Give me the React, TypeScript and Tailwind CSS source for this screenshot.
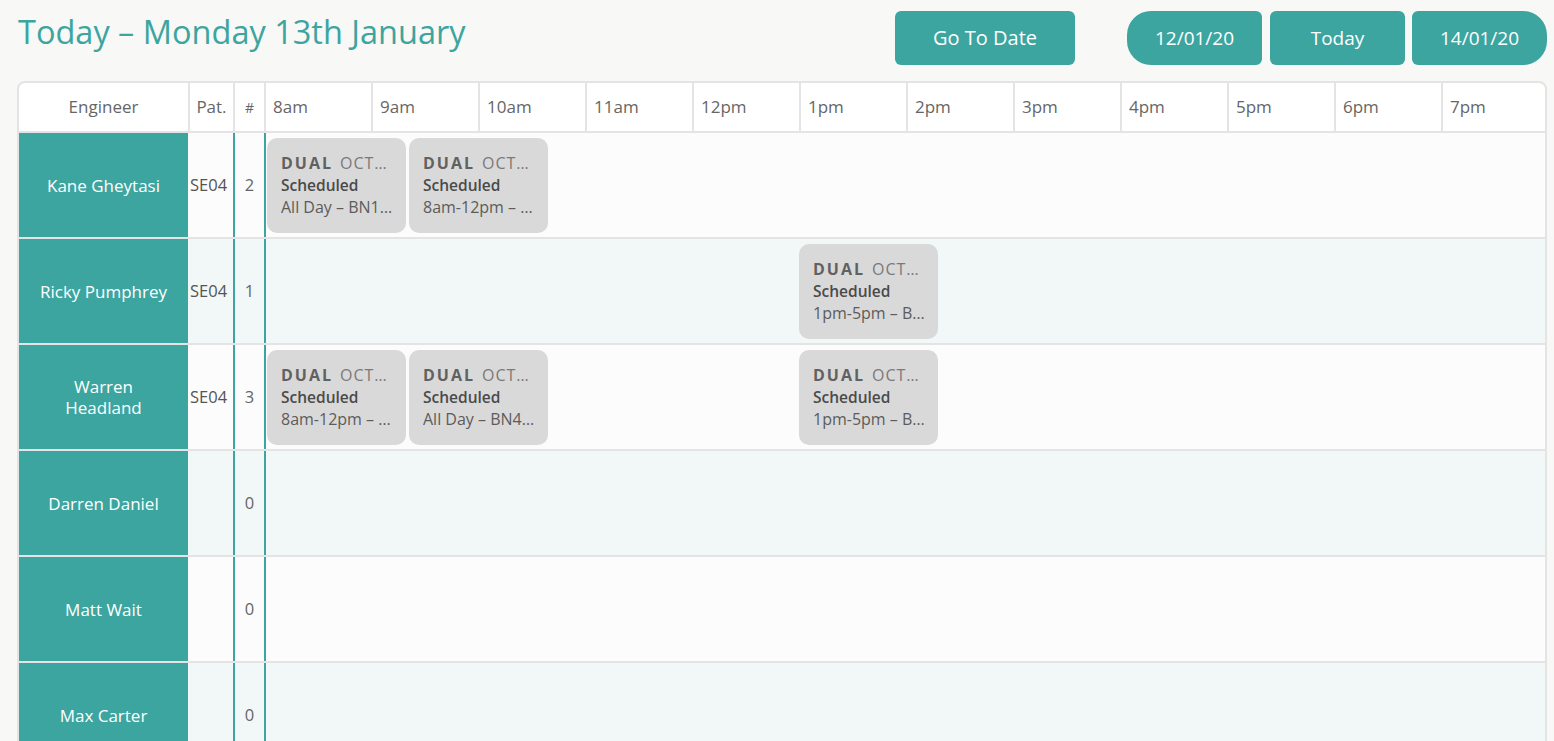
import React from "react";

type Job = { ml: string; time: string };
type Row = { name: string; pat: string; count: string; jobs: Job[] };

const rows: Row[] = [
  {
    name: "Kane Gheytasi",
    pat: "SE04",
    count: "2",
    jobs: [
      { ml: "ml-[1px]", time: "All Day – BN1 3XG" },
      { ml: "ml-[3px]", time: "8am-12pm – BN2 4PL" },
    ],
  },
  {
    name: "Ricky Pumphrey",
    pat: "SE04",
    count: "1",
    jobs: [{ ml: "ml-[533px]", time: "1pm-5pm – BN3 7QT" }],
  },
  {
    name: "Warren Headland",
    pat: "SE04",
    count: "3",
    jobs: [
      { ml: "ml-[1px]", time: "8am-12pm – BN1 6GH" },
      { ml: "ml-[3px]", time: "All Day – BN41 1AB" },
      { ml: "ml-[251px]", time: "1pm-5pm – BN2 9RT" },
    ],
  },
  { name: "Darren Daniel", pat: "", count: "0", jobs: [] },
  { name: "Matt Wait", pat: "", count: "0", jobs: [] },
  { name: "Max Carter", pat: "", count: "0", jobs: [] },
];

const hours = ["8am", "9am", "10am", "11am", "12pm", "1pm", "2pm", "3pm", "4pm", "5pm", "6pm", "7pm"];

function Card({ job }: { job: Job }) {
  return (
    <div
      className={`${job.ml} flex h-[95px] w-[139px] shrink-0 flex-col justify-center rounded-[10px] bg-[#d9d9d9] pl-[14px] pr-[12px]`}
    >
      <div className="truncate text-[16px] leading-[22px] text-[#7a7a7a]">
        <span className="font-bold tracking-[2px] text-[#616161]">DUAL</span>
        <span className="ml-[7px] tracking-[1px]">OCTOPUS</span>
      </div>
      <div className="truncate text-[15.5px] font-semibold leading-[22px] text-[#4a4a4a]">Scheduled</div>
      <div className="truncate text-[16px] leading-[22px] text-[#5c5c5c]">{job.time}</div>
    </div>
  );
}

export default function App() {
  return (
    <div className="min-h-screen bg-[#f8f8f6] pl-[17px] pr-[7px] font-['Open_Sans',sans-serif]">
      <div className="flex h-[81px] items-start">
        <h1 className="ml-[1px] mt-[11px] text-[32.5px] font-normal leading-[42px] text-[#3ca59f]">
          Today – Monday 13th January
        </h1>
        <div className="ml-auto mt-[11px] flex items-center">
          <button className="mr-[52px] h-[54px] w-[180px] rounded-[6px] bg-[#3ca59f] text-[20px] text-white">
            Go To Date
          </button>
          <button className="h-[54px] w-[135px] rounded-l-[24px] rounded-r-[6px] bg-[#3ca59f] text-[19px] text-white">
            12/01/20
          </button>
          <button className="ml-[8px] h-[54px] w-[135px] rounded-[6px] bg-[#3ca59f] text-[19px] text-white">
            Today
          </button>
          <button className="ml-[7px] h-[54px] w-[135px] rounded-l-[6px] rounded-r-[24px] bg-[#3ca59f] text-[19px] text-white">
            14/01/20
          </button>
        </div>
      </div>

      <div className="overflow-hidden rounded-t-[8px] border-2 border-[#e4e4e4] bg-white">
        <div className="grid h-[50px] grid-cols-[171px_45px_31px_repeat(11,107px)_minmax(0,1fr)] border-b-2 border-[#e4e4e4] text-[17px] text-[#666]">
          <div className="flex items-center justify-center border-r-2 border-[#e4e4e4]">Engineer</div>
          <div className="flex items-center justify-center border-r-2 border-[#e4e4e4]">Pat.</div>
          <div className="flex items-center justify-center border-r-2 border-[#e4e4e4] text-[14px]">#</div>
          {hours.map((h, i) => (
            <div
              key={h}
              className={`flex items-center pl-[7px] ${i < hours.length - 1 ? "border-r-2 border-[#e4e4e4]" : ""}`}
            >
              {h}
            </div>
          ))}
        </div>

        {rows.map((r, i) => (
          <div
            key={r.name}
            className={`flex h-[106px] border-b-2 border-[#e4e4e4] ${i % 2 === 0 ? "bg-[#fcfcfc]" : "bg-[#f2f7f7]"}`}
          >
            <div className="flex w-[169px] shrink-0 items-center justify-center bg-[#3ca59f] px-[18px] text-center text-[17px] leading-[21px] text-white">
              {r.name}
            </div>
            <div className="ml-[2px] flex w-[43px] shrink-0 items-center overflow-visible whitespace-nowrap text-[16.5px] text-[#555]">
              {r.pat}
            </div>
            <div className="flex w-[33px] shrink-0 items-center justify-center border-l-2 border-r-2 border-[#3ca59f] text-[16.5px] text-[#666]">
              {r.count}
            </div>
            <div className="flex min-w-0 flex-1 items-center">
              {r.jobs.map((j, k) => (
                <Card key={k} job={j} />
              ))}
            </div>
          </div>
        ))}
      </div>
    </div>
  );
}
